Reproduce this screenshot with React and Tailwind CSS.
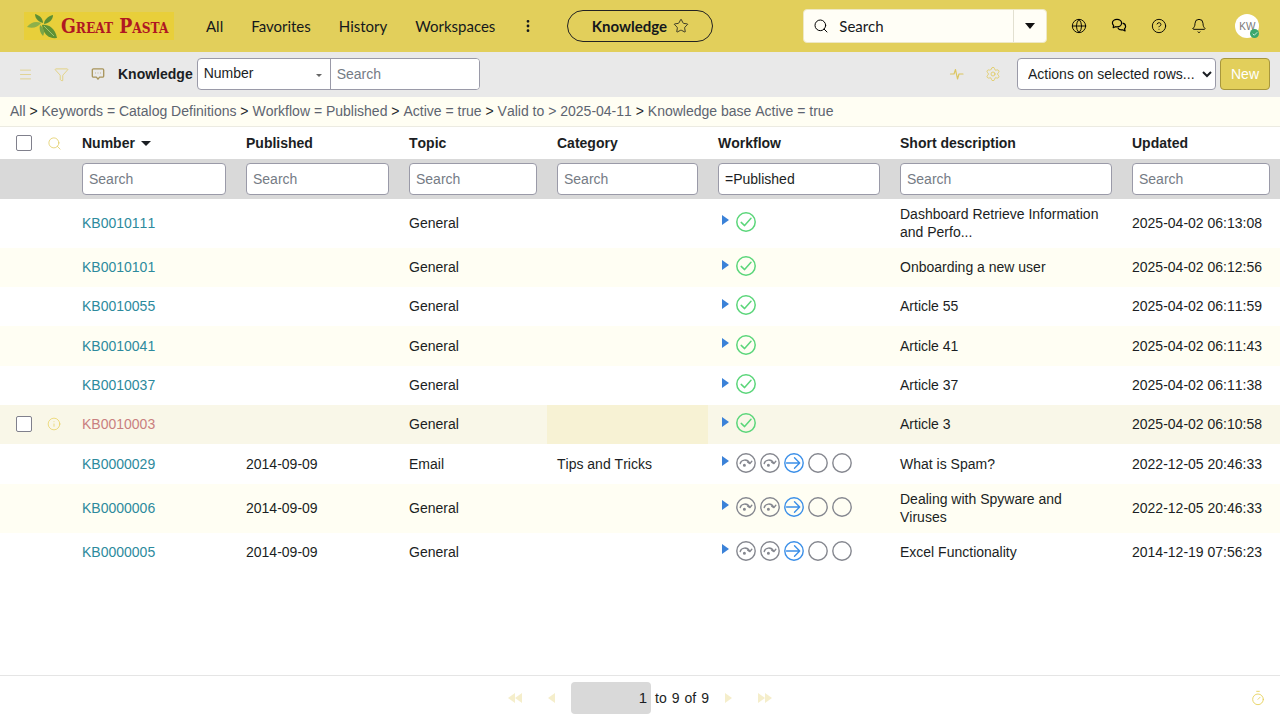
import React from 'react'
import { Menu, Filter, Search, Star, Globe, CircleHelp, Bell, Settings, Timer, Info, EllipsisVertical, Check } from 'lucide-react'

const COLS = 'grid grid-cols-[40px_32px_164px_163px_148px_161px_182px_232px_158px]'

const DONE = ['done']
const FLOW = ['skip', 'skip', 'active', 'empty', 'empty']

const rows = [
  { id: 'KB0010111', topic: 'General', flow: DONE, desc: 'Dashboard Retrieve Information and Perfo...', updated: '2025-04-02 06:13:08', tall: true },
  { id: 'KB0010101', topic: 'General', flow: DONE, desc: 'Onboarding a new user', updated: '2025-04-02 06:12:56' },
  { id: 'KB0010055', topic: 'General', flow: DONE, desc: 'Article 55', updated: '2025-04-02 06:11:59' },
  { id: 'KB0010041', topic: 'General', flow: DONE, desc: 'Article 41', updated: '2025-04-02 06:11:43' },
  { id: 'KB0010037', topic: 'General', flow: DONE, desc: 'Article 37', updated: '2025-04-02 06:11:38' },
  { id: 'KB0010003', topic: 'General', flow: DONE, desc: 'Article 3', updated: '2025-04-02 06:10:58', hover: true },
  { id: 'KB0000029', published: '2014-09-09', topic: 'Email', category: 'Tips and Tricks', flow: FLOW, desc: 'What is Spam?', updated: '2022-12-05 20:46:33' },
  { id: 'KB0000006', published: '2014-09-09', topic: 'General', flow: FLOW, desc: 'Dealing with Spyware and Viruses', updated: '2022-12-05 20:46:33', tall: true },
  { id: 'KB0000005', published: '2014-09-09', topic: 'General', flow: FLOW, desc: 'Excel Functionality', updated: '2014-12-19 07:56:23' },
]

const headers = ['Published', 'Topic', 'Category', 'Workflow', 'Short description', 'Updated']

function FlowIcon({ kind }) {
  if (kind === 'done') {
    return (
      <svg width="20" height="20" viewBox="0 0 20 20" fill="none" stroke="#5bd67a" strokeWidth="1.5" strokeLinecap="round" strokeLinejoin="round">
        <circle cx="10" cy="10" r="9.2" />
        <path d="M5.2 10.4l3.4 3.2 6.4-7.4" />
      </svg>
    )
  }
  if (kind === 'active') {
    return (
      <svg width="20" height="20" viewBox="0 0 20 20" fill="none" stroke="#3b8fe8" strokeWidth="1.4" strokeLinecap="round" strokeLinejoin="round">
        <circle cx="10" cy="10" r="9.2" />
        <path d="M2.5 10h13M10.5 4.8l5.2 5.2-5.2 5.2" />
      </svg>
    )
  }
  return (
    <svg width="20" height="20" viewBox="0 0 20 20" fill="none" stroke="#85878f" strokeWidth="1.4" strokeLinecap="round" strokeLinejoin="round">
      <circle cx="10" cy="10" r="9.2" />
      {kind === 'skip' && (
        <>
          <path d="M4.2 10.5c1-4 7-5 9.4-.4" />
          <path d="M15.8 8.2l-1.9 2.4-2.2-1.4" />
          <circle cx="8.4" cy="12.2" r="0.8" fill="#85878f" />
        </>
      )}
    </svg>
  )
}

function Chats() {
  return (
    <svg width="16" height="16" viewBox="0 0 16 16" fill="none" stroke="#000" strokeWidth="1.2" strokeLinejoin="round">
      <path d="M6 1.400c-2.600 0-4.600 1.600-4.600 3.600 0 1 .5 1.800 1.200 2.500L2.200 9.600l2.300-.9c.5.100 1 .2 1.500.2 2.600 0 4.600-1.700 4.600-3.900S8.600 1.400 6 1.400z" />
      <path d="M11.600 5.200c1.800.4 3 1.700 3 3.200 0 .9-.4 1.700-1.100 2.300l.6 2.300-2.400-1.200c-2 .4-4.100-.5-4.900-2.100" />
    </svg>
  )
}

function ChatDots() {
  return (
    <svg width="14" height="14" viewBox="0 0 14 14" fill="none" stroke="#a8945a" strokeWidth="1.3" strokeLinejoin="round">
      <path d="M2.500 1.800h9a1.200 1.200 0 0 1 1.200 1.200v6a1.200 1.200 0 0 1-1.200 1.200H8.600L7 12.200 5.400 10.200H2.500A1.200 1.200 0 0 1 1.300 9V3a1.200 1.200 0 0 1 1.200-1.200z" />
      <path d="M4.300 6h.4M6.800 6h.4M9.300 6h.4" strokeWidth="1.500" />
    </svg>
  )
}

function Pulse() {
  return (
    <svg width="16" height="16" viewBox="0 0 16 16" fill="none" stroke="#dcc660" strokeWidth="1.2" strokeLinejoin="round" strokeLinecap="round">
      <path d="M1.500 8h3.500l1.500-4.500 2 9.500 1.500-5h4" />
    </svg>
  )
}

function Logo() {
  return (
    <div className="flex h-[28px] w-[150px] items-center overflow-hidden bg-[#e8cf3a] pl-[2px]">
      <svg width="34" height="28" viewBox="0 0 34 28" className="shrink-0">
        <path d="M1 15c4-5 9-6 14-4-3 4-8 6-14 4z" fill="#8db04a" />
        <path d="M9 2c4 1 8 4 8 9-4-1-8-4-8-9z" fill="#5d8f35" />
        <path d="M27 3c0 4-3 8-9 9 0-4 4-8 9-9z" fill="#5d8f35" />
        <path d="M16 13c5-1 13 2 15 13-8 1-14-4-15-13z" fill="#5f9235" />
        <path d="M14 13c-1 4 0 8 3 11 2-4 1-8-3-11z" fill="#7aa545" />
        <path d="M18 14l10 10" stroke="#b2cf7c" strokeWidth="0.8" />
      </svg>
      <span className="ml-[1px] origin-left scale-x-[0.87] whitespace-nowrap font-['DejaVu_Serif',serif] text-[20px] font-bold leading-none text-[#b01822] [font-variant:small-caps]">
        Great Pasta
      </span>
    </div>
  )
}

function TopBar() {
  return (
    <div className="flex h-[52px] shrink-0 items-center bg-[#e2cf5b] pl-[24px] font-['Lato',sans-serif] text-[15px] text-[#15181c]">
      <Logo />
      <div className="ml-[32px] flex items-center">
        <span>All</span>
        <span className="ml-[28px]">Favorites</span>
        <span className="ml-[28px]">History</span>
        <span className="ml-[28px]">Workspaces</span>
        <EllipsisVertical size={16} strokeWidth={2.2} className="ml-[25px]" />
      </div>
      <div className="ml-[31px] flex h-[32px] w-[146px] items-center justify-center gap-[6px] rounded-full border border-[#222] font-bold">
        <span>Knowledge</span>
        <Star size={16} strokeWidth={1.2} />
      </div>
      <div className="ml-[90px] flex h-[34px] w-[244px] items-center rounded-[4px] border border-[#eee8c4] bg-[#fffef6]">
        <Search size={16} strokeWidth={1.5} color="#000" className="ml-[9px]" />
        <span className="ml-[10px] flex-1">Search</span>
        <div className="flex h-full w-[33px] items-center justify-center border-l border-[#e2e0d0]">
          <div className="h-0 w-0 border-x-[5px] border-t-[6px] border-x-transparent border-t-[#111]" />
        </div>
      </div>
      <div className="ml-[24px] flex items-center gap-[24px]">
        <Globe size={16} strokeWidth={1.4} color="#000" />
        <Chats />
        <CircleHelp size={16} strokeWidth={1.4} color="#000" />
        <Bell size={16} strokeWidth={1.4} color="#000" />
      </div>
      <div className="relative ml-[28px] flex h-[24px] w-[24px] items-center justify-center rounded-full bg-white font-['Liberation_Sans',sans-serif] text-[10px] text-[#777]">
        KW
        <div className="absolute bottom-[0px] right-[0px] flex h-[9px] w-[9px] items-center justify-center rounded-full bg-[#3aa76d]">
          <Check size={6} strokeWidth={3} color="#fff" />
        </div>
      </div>
    </div>
  )
}

function ToolBar() {
  return (
    <div className="flex h-[45px] shrink-0 items-center bg-[#e9e9e9] pb-[1px] pl-[18px] pr-[10px] text-[14px] text-[#1b1e23]">
      <Menu size={15} strokeWidth={1} color="#dcc660" />
      <Filter size={15} strokeWidth={1.1} color="#e0c95a" className="ml-[21px]" />
      <div className="ml-[22px]"><ChatDots /></div>
      <span className="ml-[13px] font-bold">Knowledge</span>
      <div className="ml-[4px] flex h-[32px] w-[283px] overflow-hidden rounded-[4px] border border-[#9a9aa8] bg-white">
        <div className="flex w-[133px] items-start justify-between border-r border-[#9a9aa8] pl-[6px] pr-[8px] pt-[4px]">
          <span>Number</span>
          <div className="mt-[11px] h-0 w-0 border-x-[3px] border-t-[3px] border-x-transparent border-t-[#666]" />
        </div>
        <input placeholder="Search" className="min-w-0 flex-1 bg-white px-[6px] pt-[1px] text-[14px] outline-none placeholder:text-[#757b85]" />
      </div>
      <div className="ml-auto flex items-center">
        <Pulse />
        <Settings size={16} strokeWidth={1.2} color="#e0c95a" className="ml-[20px]" />
        <select className="ml-[16px] h-[32px] w-[199px] rounded-[4px] border border-[#9a9aa8] bg-white pl-[6px] text-[14px] text-[#1b1e23]">
          <option>Actions on selected rows...</option>
        </select>
        <button className="ml-[4px] h-[32px] w-[50px] rounded-[4px] border border-[#a8973c] bg-[#e2cf5b] text-[14px] text-white">New</button>
      </div>
    </div>
  )
}

function Breadcrumb() {
  const parts = ['All', 'Keywords = Catalog Definitions', 'Workflow = Published', 'Active = true', 'Valid to > 2025-04-11', 'Knowledge base Active = true']
  return (
    <div className="flex h-[30px] shrink-0 items-center whitespace-pre border-b border-[#ecebe2] bg-[#fffef3] pl-[10px] text-[14px] text-[#5d6470] [font-kerning:none]">
      {parts.map((p, i) => (
        <span key={p}>
          {i > 0 && <span className="text-[#22262b]"> &gt; </span>}
          {p}
        </span>
      ))}
    </div>
  )
}

function Table() {
  return (
    <div className="min-h-0 flex-1 text-[14px] leading-[18px] text-[#1b1e23] [font-kerning:none]">
      <div className={`${COLS} h-[32px] items-center font-bold`}>
        <div className="pl-[16px]"><div className="h-[16px] w-[16px] rounded-[2px] border border-[#80808c] bg-white" /></div>
        <div className="pl-[7px]"><Search size={15} strokeWidth={1.2} color="#e0c95a" /></div>
        <div className="flex items-center gap-[6px] px-[10px]">
          Number
          <div className="h-0 w-0 border-x-[5px] border-t-[5px] border-x-transparent border-t-[#1b1e23]" />
        </div>
        {headers.map((h) => <div key={h} className="px-[10px]">{h}</div>)}
      </div>
      <div className={`${COLS} h-[39.67px] items-center bg-[#d9d9d9]`}>
        <div />
        <div />
        {['', '', '', '', '=Published', '', ''].map((v, i) => (
          <div key={i} className="px-[10px]">
            <input
              defaultValue={v}
              placeholder="Search"
              className="h-[32px] w-full rounded-[4px] border border-[#9a9aa8] bg-white px-[6px] text-[14px] text-[#1b1e23] outline-none placeholder:text-[#757b85]"
            />
          </div>
        ))}
      </div>
      {rows.map((r, i) => {
        const bg = r.hover ? 'bg-[#f9f7e8]' : i % 2 === 1 ? 'bg-[#fffef3]' : 'bg-white'
        return (
          <div key={r.id} className={`${COLS} ${r.tall ? 'h-[49px]' : 'h-[39.33px]'} ${bg} items-center pb-[0.6px]`}>
            <div className="pl-[16px]">
              {r.hover && <div className="h-[16px] w-[16px] rounded-[2px] border border-[#80808c] bg-white" />}
            </div>
            <div className="pl-[7px]">
              {r.hover && <Info size={14} strokeWidth={1.2} color="#e6cf55" />}
            </div>
            <div className={`px-[10px] ${r.hover ? 'text-[#c97f7f]' : 'text-[#2d8a9d]'}`}>{r.id}</div>
            <div className="px-[10px]">{r.published}</div>
            <div className="px-[10px]">{r.topic}</div>
            <div className={`-mb-[0.6px] flex items-center self-stretch px-[10px] ${r.hover ? 'bg-[#f7f2d4]' : ''}`}>{r.category}</div>
            <div className="-mt-[2px] flex items-center gap-[4px] px-[10px]">
              <div className="ml-[4px] mr-[3px] -mt-[3px] h-0 w-0 border-y-[5px] border-l-[7px] border-y-transparent border-l-[#3b82d8]" />
              {r.flow.map((k, j) => <FlowIcon key={j} kind={k} />)}
            </div>
            <div className="px-[10px]">{r.desc}</div>
            <div className="px-[10px]">{r.updated}</div>
          </div>
        )
      })}
    </div>
  )
}

function Arrow({ dir, double }) {
  const cls = dir === 'left'
    ? 'h-0 w-0 border-y-[5px] border-r-[7px] border-y-transparent border-r-[#f5eecb]'
    : 'h-0 w-0 border-y-[5px] border-l-[7px] border-y-transparent border-l-[#f5eecb]'
  return (
    <div className="flex w-[14px] justify-center">
      <div className={cls} />
      {double && <div className={cls} />}
    </div>
  )
}

function Pager() {
  return (
    <div className="flex h-[45px] shrink-0 items-center border-t border-[#e5e5e5] bg-white pr-[14px] text-[14px] text-[#1b1e23]">
      <div className="ml-[508px] flex items-center">
        <Arrow dir="left" double />
        <div className="ml-[22px]"><Arrow dir="left" /></div>
        <div className="ml-[13px] flex h-[32px] w-[80px] items-center justify-end rounded-[4px] bg-[#d9d9d9] pr-[4px] pt-[1px] text-[15px]">1</div>
        <div className="ml-[4px] flex gap-[5px]"><span>to</span><span>9</span><span>of</span><span>9</span></div>
        <div className="ml-[13px]"><Arrow dir="right" /></div>
        <div className="ml-[22px]"><Arrow dir="right" double /></div>
      </div>
      <Timer size={16} strokeWidth={1.3} color="#e6cf55" className="ml-auto" />
    </div>
  )
}

export default function App() {
  return (
    <div className="flex h-screen flex-col overflow-hidden bg-white font-['Liberation_Sans',Arial,sans-serif]">
      <TopBar />
      <ToolBar />
      <Breadcrumb />
      <Table />
      <Pager />
    </div>
  )
}
